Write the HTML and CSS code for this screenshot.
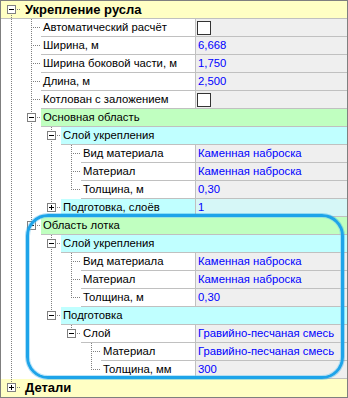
FILE: index.html
```html
<!DOCTYPE html>
<html lang="ru">

<head>
    <meta charset="UTF-8">
    <title>Укрепление русла</title>
    <link rel="stylesheet" href="styles.css">
</head>

<body>
    <div class="grid">
        <div class="row root-row">
            <span class="twig root"><span class="toggle"></span></span>
            <span class="label">Укрепление русла</span>
        </div>

        <div class="row">
            <span class="twig pipe"></span><span class="twig tee"></span>
            <span class="cell"><span class="name">Автоматический расчёт</span><span class="value"><span class="check"></span></span></span>
        </div>
        <div class="row">
            <span class="twig pipe"></span><span class="twig tee"></span>
            <span class="cell"><span class="name">Ширина, м</span><span class="value">6,668</span></span>
        </div>
        <div class="row">
            <span class="twig pipe"></span><span class="twig tee"></span>
            <span class="cell"><span class="name">Ширина боковой части, м</span><span class="value">1,750</span></span>
        </div>
        <div class="row">
            <span class="twig pipe"></span><span class="twig tee"></span>
            <span class="cell"><span class="name">Длина, м</span><span class="value">2,500</span></span>
        </div>
        <div class="row">
            <span class="twig pipe"></span><span class="twig tee"></span>
            <span class="cell"><span class="name">Котлован с заложением</span><span class="value"><span class="check"></span></span></span>
        </div>

        <!-- Основная область -->
        <div class="row">
            <span class="twig pipe"></span><span class="twig tee"><span class="toggle"></span></span>
            <span class="cell group green">Основная область</span>
        </div>
        <div class="row">
            <span class="twig pipe"></span><span class="twig pipe"></span><span class="twig tee"><span class="toggle"></span></span>
            <span class="cell group cyan">Слой укрепления</span>
        </div>
        <div class="row">
            <span class="twig pipe"></span><span class="twig pipe"></span><span class="twig pipe"></span><span class="twig tee"></span>
            <span class="cell"><span class="name">Вид материала</span><span class="value">Каменная наброска</span></span>
        </div>
        <div class="row">
            <span class="twig pipe"></span><span class="twig pipe"></span><span class="twig pipe"></span><span class="twig tee"></span>
            <span class="cell"><span class="name">Материал</span><span class="value">Каменная наброска</span></span>
        </div>
        <div class="row">
            <span class="twig pipe"></span><span class="twig pipe"></span><span class="twig pipe"></span><span class="twig elbow"></span>
            <span class="cell"><span class="name">Толщина, м</span><span class="value">0,30</span></span>
        </div>
        <div class="row">
            <span class="twig pipe"></span><span class="twig pipe"></span><span class="twig elbow"><span class="toggle plus"></span></span>
            <span class="cell cyan"><span class="name">Подготовка, слоёв</span><span class="value pale">1</span></span>
        </div>

        <!-- Область лотка -->
        <div class="row">
            <span class="twig pipe"></span><span class="twig elbow"><span class="toggle"></span></span>
            <span class="cell group green">Область лотка</span>
        </div>
        <div class="row">
            <span class="twig pipe"></span><span class="twig"></span><span class="twig tee"><span class="toggle"></span></span>
            <span class="cell group cyan">Слой укрепления</span>
        </div>
        <div class="row">
            <span class="twig pipe"></span><span class="twig"></span><span class="twig pipe"></span><span class="twig tee"></span>
            <span class="cell"><span class="name">Вид материала</span><span class="value">Каменная наброска</span></span>
        </div>
        <div class="row">
            <span class="twig pipe"></span><span class="twig"></span><span class="twig pipe"></span><span class="twig tee"></span>
            <span class="cell"><span class="name">Материал</span><span class="value">Каменная наброска</span></span>
        </div>
        <div class="row">
            <span class="twig pipe"></span><span class="twig"></span><span class="twig pipe"></span><span class="twig elbow"></span>
            <span class="cell"><span class="name">Толщина, м</span><span class="value">0,30</span></span>
        </div>
        <div class="row">
            <span class="twig pipe"></span><span class="twig"></span><span class="twig elbow"><span class="toggle"></span></span>
            <span class="cell group cyan">Подготовка</span>
        </div>
        <div class="row">
            <span class="twig pipe"></span><span class="twig"></span><span class="twig"></span><span class="twig elbow"><span class="toggle"></span></span>
            <span class="cell"><span class="name">Слой</span><span class="value">Гравийно-песчаная смесь</span></span>
        </div>
        <div class="row">
            <span class="twig pipe"></span><span class="twig"></span><span class="twig"></span><span class="twig"></span><span class="twig tee"></span>
            <span class="cell"><span class="name">Материал</span><span class="value">Гравийно-песчаная смесь</span></span>
        </div>
        <div class="row">
            <span class="twig pipe"></span><span class="twig"></span><span class="twig"></span><span class="twig"></span><span class="twig elbow"></span>
            <span class="cell"><span class="name">Толщина, мм</span><span class="value">300</span></span>
        </div>

        <div class="row root-row last">
            <span class="twig elbow"><span class="toggle plus"></span></span>
            <span class="label">Детали</span>
        </div>

        <div class="highlight"></div>
    </div>
</body>

</html>
```

FILE: styles.css
```css
:root {
    --dots-v: repeating-linear-gradient(to bottom, #808080 0 1px, transparent 1px 2px);
    --dots-h: repeating-linear-gradient(to right, #808080 0 1px, transparent 1px 2px);
}

body {
    margin: 0;
    background-color: #fff;
}

.grid {
    position: relative;
    width: 348px;
    height: 398px;
    box-sizing: border-box;
    border: 1px solid #7f7f7f;
    font-family: 'Liberation Sans', Arial, sans-serif;
    font-size: 11.3px;
    color: #000;
    overflow: hidden;
}

.row {
    display: flex;
    height: 18px;
}

.root-row {
    background-color: #ffffc4;
    border-bottom: 1px solid #c0c0c0;
    box-sizing: border-box;
}

.root-row.last {
    border-bottom: none;
}

.label {
    padding-left: 4px;
    font-size: 13px;
    font-weight: bold;
    line-height: 17px;
}

/* tree guide lines */
.twig {
    flex: none;
    display: flex;
    align-items: flex-start;
    width: 20px;
    height: 18px;
}

.pipe {
    background: var(--dots-v) 10px 0 / 1px 18px no-repeat;
}

.tee {
    background: var(--dots-h) 12px 8px / 9px 1px no-repeat,
        var(--dots-v) 10px 0 / 1px 18px no-repeat;
}

.elbow {
    background: var(--dots-h) 12px 8px / 9px 1px no-repeat,
        var(--dots-v) 10px 0 / 1px 9px no-repeat;
}

.root {
    background: var(--dots-h) 12px 8px / 9px 1px no-repeat,
        var(--dots-v) 10px 8px / 1px 10px no-repeat;
}

.toggle {
    width: 9px;
    height: 9px;
    box-sizing: border-box;
    margin: 4px 0 0 6px;
    border: 1px solid #808080;
    background: linear-gradient(#000, #000) center / 5px 1px no-repeat, #fff;
}

.toggle.plus {
    background: linear-gradient(#000, #000) center / 5px 1px no-repeat,
        linear-gradient(#000, #000) center / 1px 5px no-repeat, #fff;
}

/* name / value cells */
.cell {
    flex: 1;
    display: flex;
    min-width: 0;
    height: 18px;
    box-sizing: border-box;
    border-bottom: 1px solid #c0c0c0;
    line-height: 17px;
}

.group {
    padding-left: 2px;
}

.green {
    background-color: #c0ffc0;
}

.cyan {
    background-color: #c0ffff;
}

.name {
    flex: 1;
    min-width: 0;
    padding-left: 2px;
    white-space: nowrap;
    overflow: hidden;
}

.value {
    flex: none;
    display: flex;
    align-items: flex-start;
    width: 152px;
    box-sizing: border-box;
    padding-left: 2px;
    border-left: 1px solid #c0c0c0;
    background-color: #efefef;
    color: #0000ff;
    white-space: nowrap;
}

.value.pale {
    background-color: #d6f7f7;
}

.check {
    width: 14px;
    height: 14px;
    box-sizing: border-box;
    margin: 2px 0 0 -1px;
    border: 1px solid #333;
    background-color: #fff;
}

/* annotation frame around "Область лотка" */
.highlight {
    position: absolute;
    left: 25px;
    top: 213px;
    width: 318px;
    height: 165px;
    box-sizing: border-box;
    border: 3px solid #1ea4e9;
    border-radius: 22px;
    box-shadow: 0 0 0 1px rgba(30, 164, 233, 0.35), inset 0 0 0 1px rgba(120, 205, 245, 0.5);
    pointer-events: none;
}
```
